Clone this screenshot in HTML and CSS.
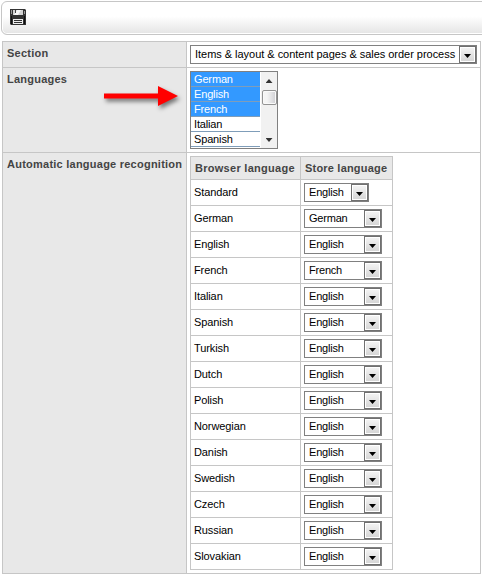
FILE: index.html
```
<!DOCTYPE html>
<html lang="en">
<head>
<meta charset="utf-8">
<title>Language settings</title>
<link rel="stylesheet" href="styles.css">
</head>
<body>
<div class="toolbar">
  <svg class="save" width="16" height="16" viewBox="0 0 16 16">
    <path fill="#333" d="M0 0h15l1 1v15H1l-1-1z"/>
    <path fill="#111" d="M1 7h1v8H1zM14 7h1v8h-1z"/>
    <path fill="#d4d4d4" d="M3 1h10v5H3z"/>
    <path fill="#f8f8f8" d="M7 1h4l-3 5H4z"/>
    <path fill="#444" d="M5 1h1v3H5z"/>
    <path fill="#999" d="M1 1h1v4H1zM14 2h1v3h-1z"/>
    <path fill="#eee" d="M3 10h10v5H3z"/>
    <path fill="#333" d="M4 11h8v1H4zM4 13h8v1H4z"/>
  </svg>
</div>
<main class="settings">
  <div class="label section-label">Section</div>
  <div class="field"><div class="select wide"><span>Items &amp; layout &amp; content pages &amp; sales order process</span><i></i></div></div>
  <div class="label languages-label">Languages
    <svg class="arrow" width="84" height="32" viewBox="0 0 84 32">
      <path class="arrow-shape" d="M3 13.500H57V6L77 16L57 26V18.500H3z"/>
    </svg>
  </div>
  <div class="field">
    <div class="listbox">
      <div class="options">
        <div class="option on">German</div>
        <div class="option on">English</div>
        <div class="option on">French</div>
        <div class="option">Italian</div>
        <div class="option">Spanish</div>
      </div>
      <div class="scrollbar"><b class="up"></b><b class="thumb"></b><b class="down"></b></div>
    </div>
  </div>
  <div class="label auto-label">Automatic language recognition</div>
  <div class="field">
    <div class="mapping">
      <div class="head browser">Browser language</div><div class="head store">Store language</div>
      <div class="cell">Standard</div><div class="cell"><div class="select short"><span>English</span><i></i></div></div>
      <div class="cell">German</div><div class="cell"><div class="select"><span>German</span><i></i></div></div>
      <div class="cell">English</div><div class="cell"><div class="select"><span>English</span><i></i></div></div>
      <div class="cell">French</div><div class="cell"><div class="select"><span>French</span><i></i></div></div>
      <div class="cell">Italian</div><div class="cell"><div class="select"><span>English</span><i></i></div></div>
      <div class="cell">Spanish</div><div class="cell"><div class="select"><span>English</span><i></i></div></div>
      <div class="cell">Turkish</div><div class="cell"><div class="select"><span>English</span><i></i></div></div>
      <div class="cell">Dutch</div><div class="cell"><div class="select"><span>English</span><i></i></div></div>
      <div class="cell">Polish</div><div class="cell"><div class="select"><span>English</span><i></i></div></div>
      <div class="cell">Norwegian</div><div class="cell"><div class="select"><span>English</span><i></i></div></div>
      <div class="cell">Danish</div><div class="cell"><div class="select"><span>English</span><i></i></div></div>
      <div class="cell">Swedish</div><div class="cell"><div class="select"><span>English</span><i></i></div></div>
      <div class="cell">Czech</div><div class="cell"><div class="select"><span>English</span><i></i></div></div>
      <div class="cell">Russian</div><div class="cell"><div class="select"><span>English</span><i></i></div></div>
      <div class="cell">Slovakian</div><div class="cell"><div class="select"><span>English</span><i></i></div></div>
    </div>
  </div>
</main>
</body>
</html>
```
FILE: styles.css
```
* { box-sizing: border-box; }
body {
  margin: 0;
  padding: 1px 0 0 1px;
  height: 576px;
  overflow: hidden;
  background: #fff;
  color: #000;
  font: 11px/15px "Liberation Sans", Arial, sans-serif;
  white-space: nowrap;
}
.toolbar {
  width: 490px;
  height: 34px;
  padding: 8px;
  border: 1px solid #c6c6c6;
  border-radius: 6px;
  background: linear-gradient(#fff 45%, #e4e4e4);
  box-shadow: inset 0 0 0 1px #fff;
}
.toolbar svg { display: block; margin-top: -1px; }
.settings {
  display: grid;
  grid-template-columns: 183px 293px;
  grid-template-rows: 25px 84px 420px;
  gap: 1px;
  width: 479px;
  margin: 6px 0 0 1px;
  padding: 1px;
  background: #c6c6c6;
}
.label {
  padding: 4px 0 0 4px;
  background: #e8e8e8;
  color: #444;
  font-weight: bold;
  letter-spacing: 0.24px;
}
.languages-label { position: relative; }
.arrow { position: absolute; left: 98px; top: 12px; overflow: visible; }
.arrow-shape { fill: #f00; filter: drop-shadow(2px 3px 2px rgba(0, 0, 0, 0.5)); }
.field { padding: 3px; background: #fff; }
.select {
  display: flex;
  justify-content: space-between;
  width: 78px;
  height: 19px;
  padding-left: 4px;
  border: 1px solid #808080;
  background: #fff;
  line-height: 16px;
  letter-spacing: -0.2px;
}
.select.short { width: 65px; }
.select.wide { width: 287px; letter-spacing: -0.03px; }
.select i {
  display: flex;
  align-items: center;
  justify-content: center;
  width: 17px;
  height: 17px;
  border: 1px solid #707070;
  box-shadow: inset 0 0 0 1px #fff;
  background: linear-gradient(#f5f5f5, #d4d4d4);
}
.select i::after {
  content: "";
  width: 7px;
  height: 4px;
  margin-top: 3px;
  background: #000;
  clip-path: polygon(0 0, 100% 0, 50% 100%);
}
.listbox {
  display: flex;
  justify-content: space-between;
  width: 88px;
  height: 78px;
  border: 1px solid #808080;
}
.options { width: 69px; letter-spacing: -0.15px; }
.option {
  height: 15px;
  padding-left: 3px;
  border-bottom: 1px solid #7f9db9;
  line-height: 15px;
}
.option.on { background: #3399ff; color: #fff; }
.scrollbar {
  display: flex;
  flex-direction: column;
  align-items: center;
  width: 16px;
  padding: 7px 0 6px;
  background: #f1f1f1;
}
.up, .down { width: 7px; height: 4px; background: #333; }
.up { clip-path: polygon(50% 0, 100% 100%, 0 100%); }
.down { margin-top: auto; clip-path: polygon(0 0, 100% 0, 50% 100%); }
.thumb {
  width: 15px;
  height: 15px;
  margin-top: 7px;
  border: 1px solid #949494;
  border-radius: 2px;
  background: linear-gradient(90deg, #f5f5f5 30%, #cfcfd3);
  box-shadow: inset 0 0 0 1px #fafafa;
}
.mapping {
  display: grid;
  grid-template-columns: 109px 91px;
  grid-template-rows: 22px repeat(15, 25px);
  gap: 1px;
  width: 203px;
  padding: 1px;
  background: #c6c6c6;
}
.head {
  padding-left: 4px;
  background: #e8e8e8;
  color: #444;
  font-weight: bold;
  line-height: 23px;
  letter-spacing: 0.28px;
}
.head.store { letter-spacing: 0.2px; }
.cell { padding: 3px; background: #fff; line-height: 18px; letter-spacing: -0.1px; }
```
